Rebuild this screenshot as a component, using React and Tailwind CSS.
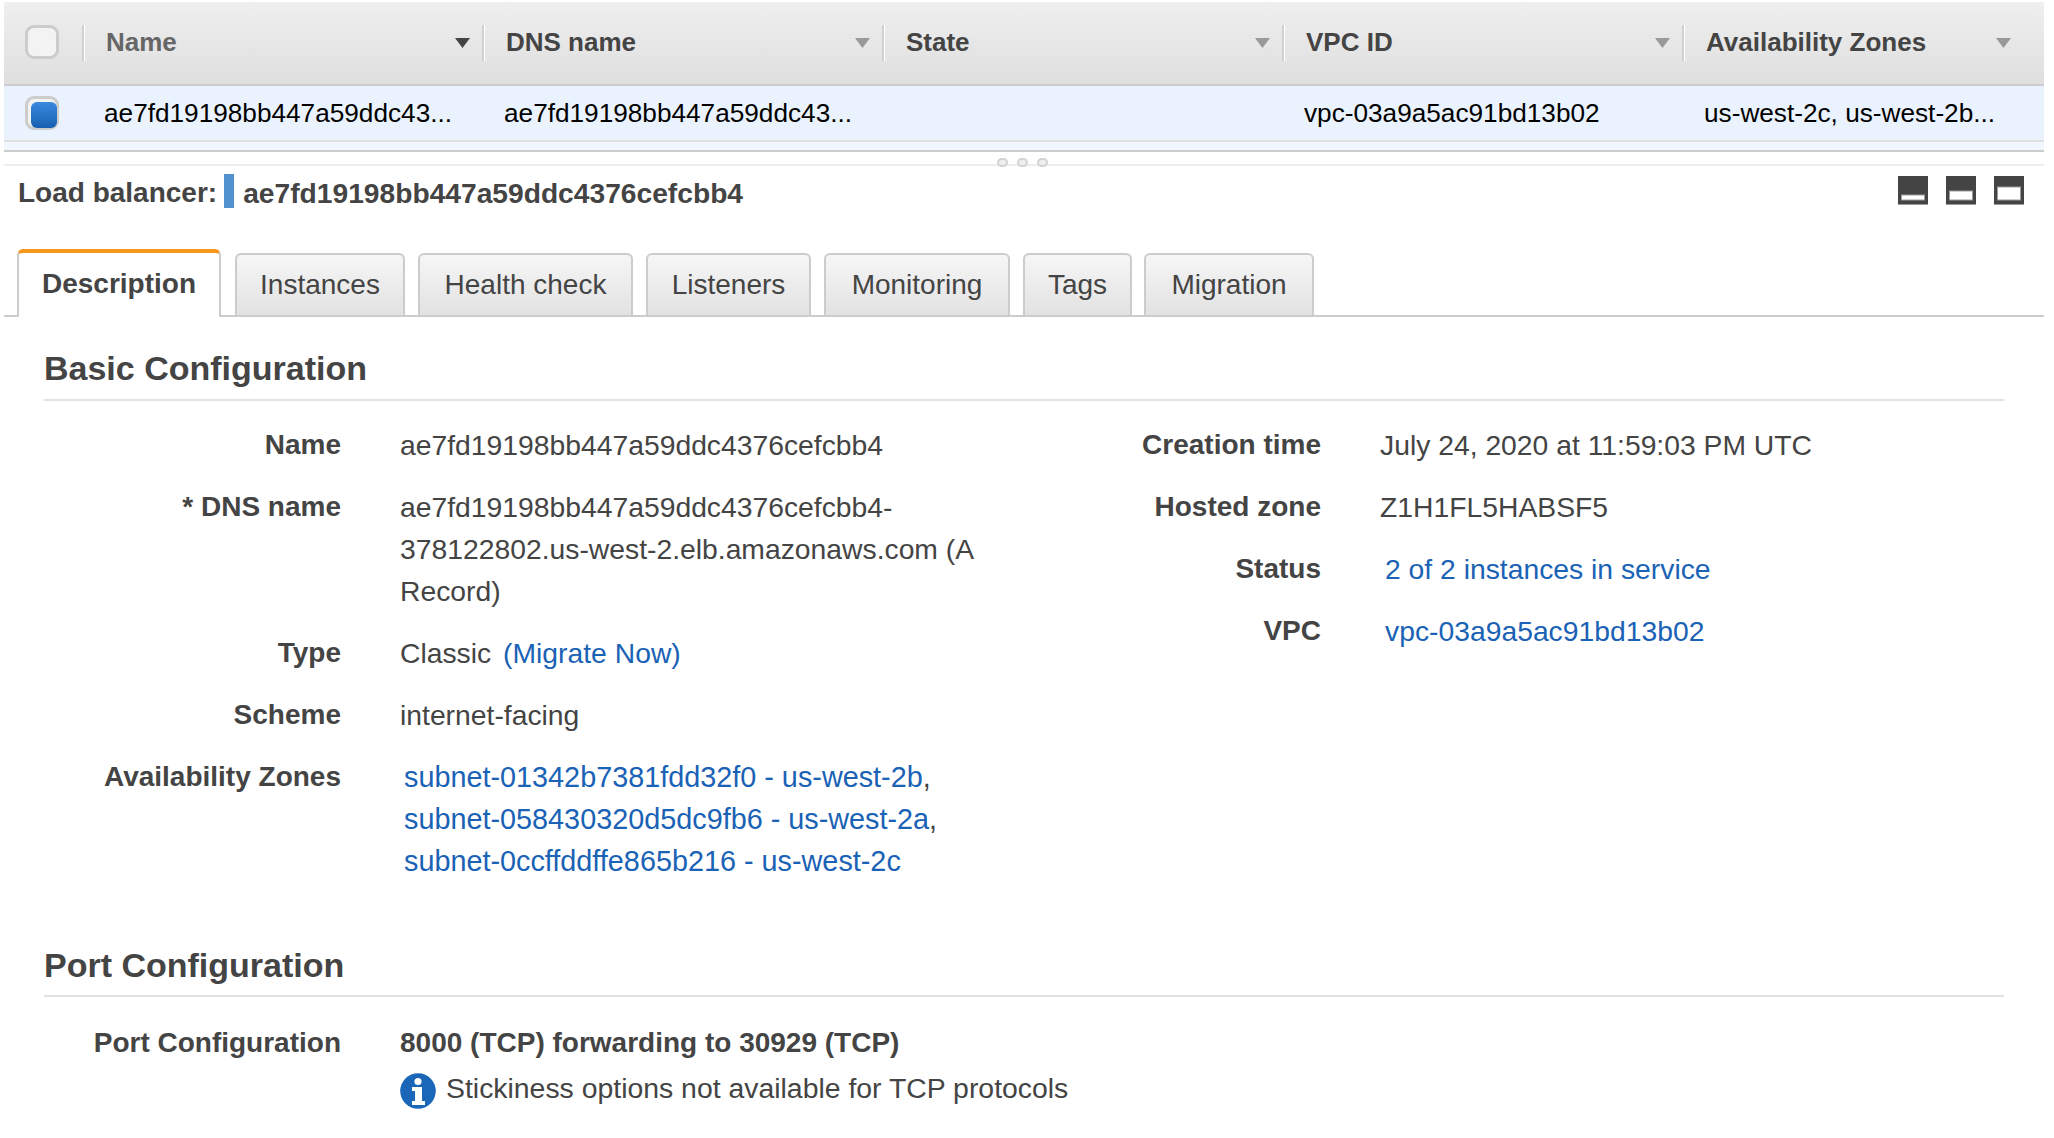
const FONT = "font-['Liberation_Sans',Arial,sans-serif]";

const columns = [
  { label: 'Name', width: 'w-[400px]', dark: true, muted: true, value: 'ae7fd19198bb447a59ddc43...' },
  { label: 'DNS name', width: 'w-[400px]', value: 'ae7fd19198bb447a59ddc43...' },
  { label: 'State', width: 'w-[400px]', value: '' },
  { label: 'VPC ID', width: 'w-[400px]', value: 'vpc-03a9a5ac91bd13b02' },
  { label: 'Availability Zones', width: 'w-[341px]', value: 'us-west-2c, us-west-2b...' },
];

const tabs = [
  { label: 'Instances', width: 'w-[170px] ml-[14px]' },
  { label: 'Health check', width: 'w-[215px] ml-[13px]' },
  { label: 'Listeners', width: 'w-[165px] ml-[13px]' },
  { label: 'Monitoring', width: 'w-[186px] ml-[13px]' },
  { label: 'Tags', width: 'w-[109px] ml-[13px]' },
  { label: 'Migration', width: 'w-[170px] ml-3' },
];

function Link({ children }) {
  return <a className="text-[#1a62b5]">{children}</a>;
}

function Row({ label, children, labelWidth = 'w-[297px]', gap = 'ml-[59px]' }) {
  return (
    <div className="flex pb-5">
      <div className={`${labelWidth} shrink-0 text-right font-bold text-[#444]`}>{label}</div>
      <div className={`${gap} min-w-0 flex-1 text-[28.3px] text-[#444]`}>{children}</div>
    </div>
  );
}

function PaneIcon({ top }) {
  return (
    <svg width="30" height="30" viewBox="0 0 30 30">
      <rect x="0" y="0" width="30" height="28" fill="#444" />
      <rect x="0" y="28" width="30" height="1" fill="#999" />
      <rect x="3.5" y={top} width="23" height={24 - top} fill="#fff" stroke="#999" />
    </svg>
  );
}

function InfoIcon() {
  return (
    <svg width="36" height="36" viewBox="0 0 36 36" className="mt-[3px] shrink-0">
      <circle cx="18" cy="18" r="17.8" fill="#1a66b8" />
      <circle cx="18" cy="8.5" r="3.6" fill="#fff" />
      <path d="M12 14h10v14h3v4H12v-4h3V18h-3z" fill="#fff" />
    </svg>
  );
}

export default function App() {
  return (
    <div className={`${FONT} h-[1138px] w-full overflow-hidden bg-white text-[28px] leading-[42px] text-[#444]`}>
      <div className="mx-1 w-[2040px] pt-0.5">
        <div className="flex h-[84px] border-b-2 border-[#ccc] bg-gradient-to-b from-[#efefef] to-[#dfdfdf]">
          <div className="flex w-[78px] shrink-0 items-center pl-[21px]">
            <div className="mb-[2px] h-[34px] w-[34px] rounded-[9px] border-[3px] border-[#ccc] bg-[#f3f3f3]" />
          </div>
          {columns.map((col) => (
            <div key={col.label} className={`${col.width} relative flex h-[82px] shrink-0 items-center`}>
              <div className="absolute left-0 top-[23px] h-9 w-[3px] border-r border-white bg-[#d0d0d0]" />
              <span className={`ml-6 pb-[2px] text-[26px] font-bold ${col.muted ? 'text-[#666]' : 'text-[#444]'}`}>{col.label}</span>
              <svg width="15" height="10" viewBox="0 0 15 10" className="absolute right-3 top-[36px]">
                <path d="M0 0h15L7.5 10z" fill={col.dark ? '#444' : '#999'} />
              </svg>
            </div>
          ))}
        </div>
        <div className="flex h-14 border-b-2 border-[#e0e0e0] bg-[#eaf2fd] text-[26.2px] text-black">
          <div className="flex w-[78px] shrink-0 items-center pl-[21px]">
            <div className="flex h-[34px] w-[34px] items-center justify-center rounded-[9px] border-[3px] border-[#ccc] bg-[#f3f3f3]">
              <div className="ml-1 mt-1 h-[26px] w-[26px] shrink-0 rounded-[6px] bg-gradient-to-b from-[#3a8ae0] to-[#1560b0]" />
            </div>
          </div>
          {columns.map((col) => (
            <div key={col.label} className={`${col.width} shrink-0 truncate pl-[22px] leading-[54px]`}>{col.value}</div>
          ))}
        </div>
        <div className="h-[10px] border-b-2 border-[#ccc] bg-[#f0f7fe]" />
        <div className="relative mt-3 h-0.5 bg-[#eee]">
          <div className="absolute -top-[6px] left-[993px] flex gap-[9px]">
            <span className="h-[9px] w-[11px] rounded-full border-2 border-[#d4d4d4] bg-[#eee]" />
            <span className="h-[9px] w-[11px] rounded-full border-2 border-[#d4d4d4] bg-[#eee]" />
            <span className="h-[9px] w-[11px] rounded-full border-2 border-[#d4d4d4] bg-[#eee]" />
          </div>
        </div>
        <div className="flex h-[42px] items-center pl-[14px] pr-[20px] pt-[8px]">
          <span className="pt-1 font-bold">Load balancer:</span>
          <span className="ml-[7px] mr-[9px] h-[34px] w-[10px] bg-[#5293cf]" />
          <span className="pt-1 text-[28.2px] font-bold">ae7fd19198bb447a59ddc4376cefcbb4</span>
          <div className="ml-auto flex gap-[18px]">
            <PaneIcon top={19} />
            <PaneIcon top={15} />
            <PaneIcon top={11} />
          </div>
        </div>
        <div className="mt-[41px] flex h-[68px] items-end border-b-2 border-[#ccc] pl-[13px]">
          <div className="-mb-0.5 h-[68px] w-[204px] shrink-0 rounded-t-[6px] border-x-2 border-t-4 border-[#ccc] border-t-[#f7981d] bg-white text-center font-bold leading-[62px]">
            Description
          </div>
          {tabs.map((tab) => (
            <div key={tab.label} className={`${tab.width} h-[62px] shrink-0 rounded-t-[6px] border-x-2 border-t-2 border-[#ccc] bg-gradient-to-b from-[#f6f6f6] to-[#e2e2e2] text-center leading-[60px]`}>
              {tab.label}
            </div>
          ))}
        </div>
        <div className="pl-10 pr-10">
          <h2 className="mt-[30px] border-b-2 border-[#e2e2e2] pb-2.5 text-[34px] font-bold leading-[42px]">Basic Configuration</h2>
          <div className="mt-[23px] flex">
            <div className="w-[1004px] shrink-0">
              <Row label="Name">ae7fd19198bb447a59ddc4376cefcbb4</Row>
              <Row label="* DNS name">
                ae7fd19198bb447a59ddc4376cefcbb4-<br />378122802.us-west-2.elb.amazonaws.com (A<br />Record)
              </Row>
              <Row label="Type">Classic <span className="ml-1"><Link>(Migrate Now)</Link></span></Row>
              <Row label="Scheme">internet-facing</Row>
              <Row label="Availability Zones">
                <div className="pl-1 text-[28.8px]">
                  <Link>subnet-01342b7381fdd32f0 - us-west-2b</Link>,<br />
                  <Link>subnet-058430320d5dc9fb6 - us-west-2a</Link>,<br />
                  <Link>subnet-0ccffddffe865b216 - us-west-2c</Link>
                </div>
              </Row>
            </div>
            <div className="flex-1">
              <Row label="Creation time" labelWidth="w-[273px]">July 24, 2020 at 11:59:03 PM UTC</Row>
              <Row label="Hosted zone" labelWidth="w-[273px]">Z1H1FL5HABSF5</Row>
              <Row label="Status" labelWidth="w-[273px]" gap="ml-[64px]"><Link>2 of 2 instances in service</Link></Row>
              <Row label="VPC" labelWidth="w-[273px]" gap="ml-[64px]"><Link>vpc-03a9a5ac91bd13b02</Link></Row>
            </div>
          </div>
          <h2 className="mt-[42px] border-b-2 border-[#e2e2e2] pb-[9px] text-[34px] font-bold leading-[42px]">Port Configuration</h2>
          <div className="mt-[25px] flex">
            <div className="w-[297px] shrink-0 text-right font-bold">Port Configuration</div>
            <div className="ml-[59px] flex-1">
              <div className="font-bold">8000 (TCP) forwarding to 30929 (TCP)</div>
              <div className="mt-[6px] flex items-start gap-2.5">
                <InfoIcon />
                <span className="text-[28.4px] leading-[36px]">Stickiness options not available for TCP protocols</span>
              </div>
            </div>
          </div>
        </div>
      </div>
    </div>
  );
}
